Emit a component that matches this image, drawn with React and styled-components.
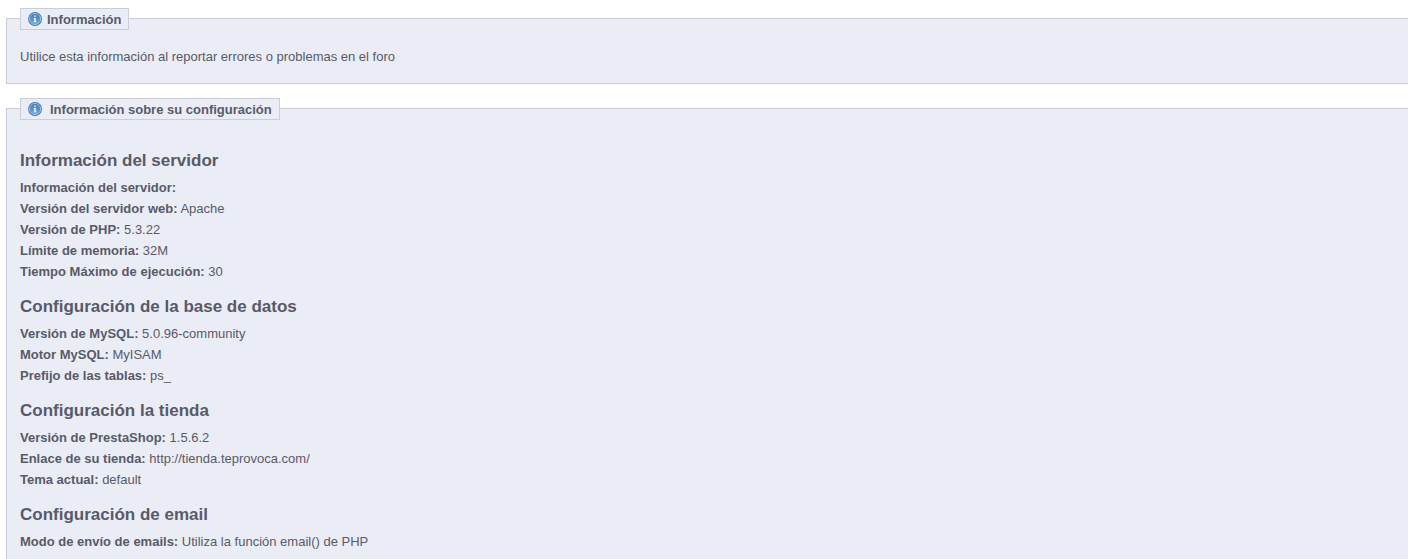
import React from "react";
import styled, { createGlobalStyle } from "styled-components";

const GlobalStyle = createGlobalStyle`
  body {
    margin: 0;
    background: #fff;
    color: #585a69;
    font: 13px/21px "Liberation Sans", Arial, Helvetica, sans-serif;
    overflow: hidden;
  }
`;

const Page = styled.main`
  display: flex;
  flex-direction: column;
  gap: 24px;
  height: 559px;
  box-sizing: border-box;
  padding: 18px 0 0 6px;
  overflow: hidden;
`;

const Fieldset = styled.section`
  flex: ${(p) => (p.$fill ? "1 0 auto" : "0 0 66px")};
  box-sizing: border-box;
  padding: 0 13px;
  background: #eaedf5;
  border: 1px solid #cccdda;
  border-width: ${(p) => (p.$fill ? "1px 0 0 1px" : "1px 0 1px 1px")};
`;

const Legend = styled.h2`
  display: flex;
  align-items: center;
  gap: ${(p) => p.$gap}px;
  width: ${(p) => p.$width}px;
  height: 22px;
  box-sizing: border-box;
  margin: -11px 0 0;
  padding: 0 0 0 7px;
  background: #eaedf5;
  border: 1px solid #cccdda;
  font-size: 13px;
  line-height: 20px;
  white-space: nowrap;
`;

const LegendText = styled.span`
  padding-top: 2px;
  line-height: 18px;
`;

const Hint = styled.p`
  margin: 16px 0 0;
`;

const Group = styled.section`
  margin-top: ${(p) => (p.$first ? 31 : 15)}px;
`;

const GroupTitle = styled.h3`
  margin: 0 0 6px;
  font-size: 17px;
  line-height: 20px;
`;

const Row = styled.p`
  margin: 0;
`;

const Icon = styled.svg`
  display: block;
  width: 14px;
  height: 14px;
`;

function InfoIcon() {
  return (
    <Icon viewBox="0 0 14 14" aria-hidden="true">
      <defs>
        <linearGradient id="disc" x1="0" y1="0" x2="0" y2="1">
          <stop offset="0" stopColor="#3f7cbd" />
          <stop offset="1" stopColor="#6fabde" />
        </linearGradient>
      </defs>
      <circle cx="7" cy="7" r="6.9" fill="#3c73b3" />
      <circle cx="7" cy="7" r="5.6" fill="url(#disc)" stroke="#a3c9ea" strokeWidth="0.9" />
      <path d="M6.2 3.5h1.6v1.3H6.2zM5.6 5.9h2.2v3.5h.7v.9H5.5v-.9h.8V6.8h-.7z" fill="#fff" />
    </Icon>
  );
}

const groups = [
  {
    title: "Información del servidor",
    rows: [
      ["Información del servidor:", ""],
      ["Versión del servidor web:", "Apache"],
      ["Versión de PHP:", "5.3.22"],
      ["Límite de memoria:", "32M"],
      ["Tiempo Máximo de ejecución:", "30"],
    ],
  },
  {
    title: "Configuración de la base de datos",
    rows: [
      ["Versión de MySQL:", "5.0.96-community"],
      ["Motor MySQL:", "MyISAM"],
      ["Prefijo de las tablas:", "ps_"],
    ],
  },
  {
    title: "Configuración la tienda",
    rows: [
      ["Versión de PrestaShop:", "1.5.6.2"],
      ["Enlace de su tienda:", "http://tienda.teprovoca.com/"],
      ["Tema actual:", "default"],
    ],
  },
  {
    title: "Configuración de email",
    rows: [["Modo de envío de emails:", "Utiliza la función email() de PHP"]],
  },
];

export default function App() {
  return (
    <>
      <GlobalStyle />
      <Page>
        <Fieldset>
          <Legend $width={109} $gap={5}>
            <InfoIcon />
            <LegendText>Información</LegendText>
          </Legend>
          <Hint>Utilice esta información al reportar errores o problemas en el foro</Hint>
        </Fieldset>
        <Fieldset $fill>
          <Legend $width={260} $gap={8}>
            <InfoIcon />
            <LegendText>Información sobre su configuración</LegendText>
          </Legend>
          {groups.map((group, i) => (
            <Group key={group.title} $first={i === 0}>
              <GroupTitle>{group.title}</GroupTitle>
              {group.rows.map(([label, value]) => (
                <Row key={label}>
                  <b>{label}</b> {value}
                </Row>
              ))}
            </Group>
          ))}
        </Fieldset>
      </Page>
    </>
  );
}
